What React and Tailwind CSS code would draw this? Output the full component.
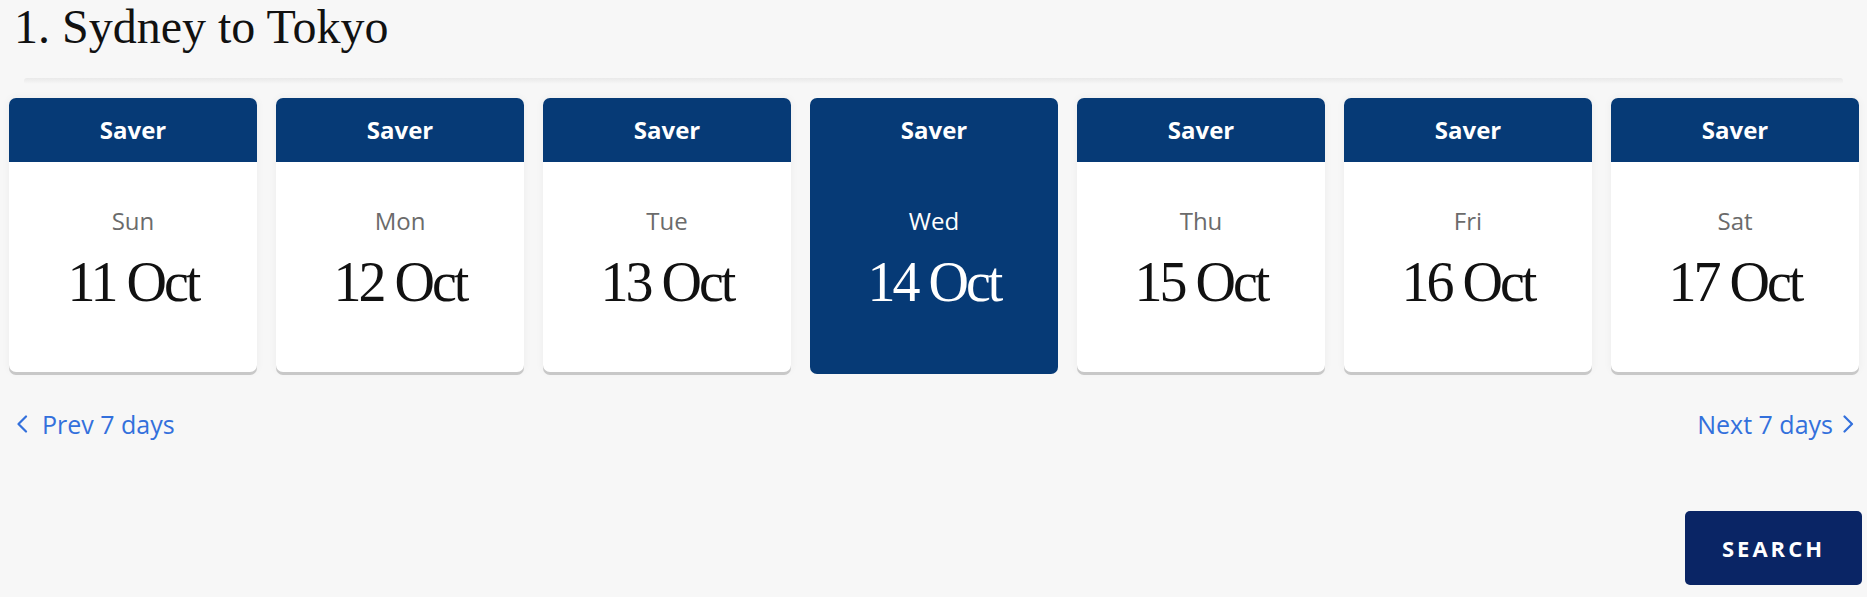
import React from "react";

const days = [
  { d: "Sun", date: "11 Oct" },
  { d: "Mon", date: "12 Oct" },
  { d: "Tue", date: "13 Oct" },
  { d: "Wed", date: "14 Oct", selected: true },
  { d: "Thu", date: "15 Oct" },
  { d: "Fri", date: "16 Oct" },
  { d: "Sat", date: "17 Oct" },
];

const sans = { fontFamily: '"Open Sans", "Liberation Sans", sans-serif' };

function Card({ d, date, selected }) {
  if (selected) {
    return (
      <div className="flex-1 h-[276px] self-start rounded-[7px] bg-[#063a76] text-white flex flex-col">
        <div className="h-[64px] flex items-center justify-center font-bold text-[24px] leading-[32px] [font-family:'Open_Sans',sans-serif]">
          Saver
        </div>
        <div className="flex flex-col items-center pt-[43px]">
          <div className="text-[24px] leading-[32px] text-white [font-family:'Open_Sans',sans-serif]">{d}</div>
          <div className="mt-[15px] text-[56px] leading-[60px] tracking-[-3px] text-white [font-family:'Liberation_Serif',serif]">
            {date}
          </div>
        </div>
      </div>
    );
  }
  return (
    <div className="flex-1 h-[274px] self-start rounded-[7px] bg-white flex flex-col shadow-[0_3px_0_0_#c8c8c8,0_0_8px_rgba(0,0,0,0.05)] overflow-visible">
      <div className="h-[64px] rounded-t-[7px] bg-[#063a76] text-white flex items-center justify-center font-bold text-[24px] leading-[32px] [font-family:'Open_Sans',sans-serif]">
        Saver
      </div>
      <div className="flex flex-col items-center pt-[43px]">
        <div className="text-[24px] leading-[32px] text-[#6b6b6b] [font-family:'Open_Sans',sans-serif]">{d}</div>
        <div className="mt-[15px] text-[56px] leading-[60px] tracking-[-3px] text-[#111] [font-family:'Liberation_Serif',serif]">
          {date}
        </div>
      </div>
    </div>
  );
}

export default function App() {
  return (
    <div className="w-full min-h-[597px] bg-[#f7f7f7] overflow-hidden">
      <h1 className="pl-[14px] pt-[1px] text-[48px] leading-[52px] font-normal text-[#111] [font-family:'Liberation_Serif',serif]">
        1. Sydney to Tokyo
      </h1>
      <div className="mt-[25px] mx-[24px] h-[6px] bg-gradient-to-b from-[#e9e9e9] to-[#f7f7f7] rounded-full" />
      <div className="mt-[14px] flex gap-[19px] pl-[9px] pr-[8px]">
        {days.map((x) => (
          <Card key={x.date} {...x} />
        ))}
      </div>
      <div className="mt-[34px] flex justify-between pl-[16px] pr-[13px] text-[#3370dc]" style={sans}>
        <a className="flex items-center gap-[14px] text-[25px] leading-[32px] cursor-pointer">
          <svg width="12" height="18" viewBox="0 0 12 18" fill="none">
            <polyline points="10,1.5 2.5,9 10,16.5" stroke="#3370dc" strokeWidth="2.2" strokeLinecap="round" strokeLinejoin="round" />
          </svg>
          <span>Prev 7 days</span>
        </a>
        <a className="flex items-center gap-[10px] text-[25px] leading-[32px] cursor-pointer">
          <span>Next 7 days</span>
          <svg width="11" height="18" viewBox="0 0 11 18" fill="none">
            <polyline points="1.5,1.5 9,9 1.5,16.5" stroke="#3370dc" strokeWidth="2.2" strokeLinecap="round" strokeLinejoin="round" />
          </svg>
        </a>
      </div>
      <div className="mt-[71px] flex justify-end pr-[5px]">
        <button className="w-[177px] h-[74px] rounded-[5px] bg-[#0a2565] text-white font-bold text-[22px] tracking-[3px] [font-family:'Open_Sans',sans-serif]">
          SEARCH
        </button>
      </div>
    </div>
  );
}
